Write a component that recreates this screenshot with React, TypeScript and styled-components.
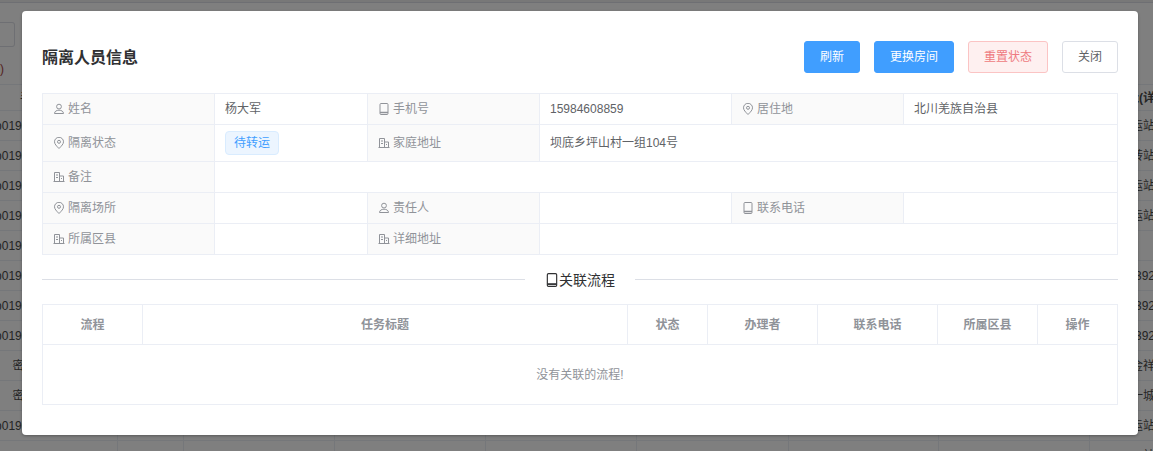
import styled, { createGlobalStyle } from 'styled-components';

type IconName = 'user' | 'mobile' | 'location' | 'building';

const BACK_ROWS = [
  { left: 'b019000000000000000', right: '发运站' },
  { left: 'b019000000000000000', right: '中转站' },
  { left: 'b019000000000000000', right: '发运站' },
  { left: 'b019000000000000000', right: '发运站' },
  { left: 'b019000000000000000', right: '' },
  { left: 'b019000000000000000', right: '138392' },
  { left: 'b019000000000000000', right: '138392' },
  { left: 'b019000000000000000', right: '138392' },
  { left: '密切接触者(一般)', right: '金祥' },
  { left: '密切接触者(一般)', right: '一城' },
  { left: 'b019000000000000000', right: '发运站' },
  { left: '', right: '站' },
];

const FLOW_COLUMNS = [
  { text: '流程', width: 100 },
  { text: '任务标题', width: 485 },
  { text: '状态', width: 80 },
  { text: '办理者', width: 110 },
  { text: '联系电话', width: 120 },
  { text: '所属区县', width: 100 },
  { text: '操作', width: 80 },
];

const Icon = ({ name, size = 12 }: { name: IconName; size?: number }) => (
  <IconSvg viewBox="0 0 12 12" $size={size}>
    {name === 'user' && (
      <>
        <circle cx="6" cy="3.6" r="2.4" />
        <path d="M1.5 10.5C1.5 8.4 3.5 7.2 6 7.2s4.500 1.200 4.500 3.300z" />
      </>
    )}
    {name === 'mobile' && (
      <>
        <rect x="2" y="0.500" width="8" height="11" rx="1" />
        <path d="M2 9.500h8" strokeWidth="1.500" />
      </>
    )}
    {name === 'location' && (
      <>
        <path d="M6 11.500C3.500 9 1.500 7 1.500 4.800a4.500 4.500 0 0 1 9 0C10.500 7 8.500 9 6 11.500z" />
        <circle cx="6" cy="4.800" r="1.500" />
      </>
    )}
    {name === 'building' && (
      <path d="M0.500 10.500h11M1.500 10.500V1.500h5v9M6.500 5h4v5.500M3 4h2M3 6.500h2M8 7.500h1" />
    )}
  </IconSvg>
);

const Label = ({ icon, text }: { icon: IconName; text: string }) => (
  <LabelCell>
    <LabelInner>
      <Icon name={icon} />
      {text}
    </LabelInner>
  </LabelCell>
);

export default function App() {
  return (
    <>
      <GlobalStyle />
      <Page>
        <BackPage>
          <TopStripe />
          <FilterBar>
            <FilterInput />
            <FilterHint>)</FilterHint>
          </FilterBar>
          <BackRow $height={26}>
            <BackCell $pad={20}>手机号</BackCell>
            <BackBlanks />
            <BackLast $bold={true}>地址(详</BackLast>
          </BackRow>
          {BACK_ROWS.map(({ left, right }, i) => (
            <BackRow key={i} $height={30}>
              <BackCell $center={true}>{left}</BackCell>
              <BackBlanks />
              <BackLast>{right}</BackLast>
            </BackRow>
          ))}
        </BackPage>
        <Overlay>
          <Modal>
            <ModalHeader>
              <ModalTitle>隔离人员信息</ModalTitle>
              <ButtonGroup>
                <Button $kind="primary" $width={56}>刷新</Button>
                <Button $kind="primary" $width={80}>更换房间</Button>
                <Button $kind="danger" $width={80}>重置状态</Button>
                <Button $kind="plain" $width={56}>关闭</Button>
              </ButtonGroup>
            </ModalHeader>
            <InfoTable>
              <colgroup>
                <col width={172} />
                <col width={153} />
                <col width={172} />
                <col width={192} />
                <col width={172} />
                <col width={214} />
              </colgroup>
              <tbody>
                <InfoRow $height={31}>
                  <Label icon="user" text="姓名" />
                  <ValueCell>杨大军</ValueCell>
                  <Label icon="mobile" text="手机号" />
                  <ValueCell>15984608859</ValueCell>
                  <Label icon="location" text="居住地" />
                  <ValueCell>北川羌族自治县</ValueCell>
                </InfoRow>
                <InfoRow $height={37}>
                  <Label icon="location" text="隔离状态" />
                  <ValueCell>
                    <StatusTag>待转运</StatusTag>
                  </ValueCell>
                  <Label icon="building" text="家庭地址" />
                  <ValueCell colSpan={3}>坝底乡坪山村一组104号</ValueCell>
                </InfoRow>
                <InfoRow $height={31}>
                  <Label icon="building" text="备注" />
                  <ValueCell colSpan={5} />
                </InfoRow>
                <InfoRow $height={31}>
                  <Label icon="location" text="隔离场所" />
                  <ValueCell />
                  <Label icon="user" text="责任人" />
                  <ValueCell />
                  <Label icon="mobile" text="联系电话" />
                  <ValueCell />
                </InfoRow>
                <InfoRow $height={31}>
                  <Label icon="building" text="所属区县" />
                  <ValueCell />
                  <Label icon="building" text="详细地址" />
                  <ValueCell colSpan={3} />
                </InfoRow>
              </tbody>
            </InfoTable>
            <Divider>
              <DividerText>
                <Icon name="mobile" size={14} />
                关联流程
              </DividerText>
            </Divider>
            <FlowTable>
              <colgroup>
                {FLOW_COLUMNS.map(({ width }, i) => (
                  <col key={i} width={width} />
                ))}
              </colgroup>
              <thead>
                <tr>
                  {FLOW_COLUMNS.map(({ text }, i) => (
                    <FlowHead key={i}>{text}</FlowHead>
                  ))}
                </tr>
              </thead>
              <tbody>
                <tr>
                  <FlowEmpty colSpan={FLOW_COLUMNS.length}>没有关联的流程!</FlowEmpty>
                </tr>
              </tbody>
            </FlowTable>
          </Modal>
        </Overlay>
      </Page>
    </>
  );
}

const BackBlanks = () => (
  <>
    {[0, 1, 2, 3, 4, 5, 6].map((i) => (
      <BackCell key={i} />
    ))}
  </>
);

const GlobalStyle = createGlobalStyle`
  html, body {
    margin: 0;
    padding: 0;
    background: #fff;
    font-family: "Liberation Sans", "Noto Sans CJK SC", sans-serif;
    font-size: 12px;
    line-height: 14px;
  }
`;

const Page = styled.div`
  position: relative;
  width: 1153px;
  height: 451px;
  overflow: hidden;
`;

const BackPage = styled.div`
  color: #4a4a4a;
`;

const TopStripe = styled.div`
  height: 2px;
  background: #f0f0f0;
  border-bottom: 1px solid #dcdfe6;
`;

const FilterBar = styled.div`
  box-sizing: border-box;
  height: 82px;
  padding-top: 19px;
  border-bottom: 1px solid #ebeef5;
  overflow: hidden;
`;

const FilterInput = styled.div`
  box-sizing: border-box;
  width: 15px;
  height: 25px;
  border: 1px solid #dcdfe6;
  border-left: 0;
  border-radius: 0 3px 3px 0;
`;

const FilterHint = styled.div`
  margin-top: 15px;
  color: #a94442;
`;

const BackRow = styled.div<{ $height: number }>`
  box-sizing: border-box;
  display: grid;
  grid-template-columns: 118px 66px 151px 151px 151px 152px 150px 151px 63px;
  height: ${(p) => p.$height}px;
  border-bottom: 1px solid #ebeef5;
`;

const BackCell = styled.div<{ $center?: boolean; $pad?: number }>`
  display: flex;
  align-items: center;
  justify-content: ${(p) => (p.$center ? 'center' : 'flex-start')};
  padding-left: ${(p) => p.$pad ?? 0}px;
  border-right: 1px solid #ebeef5;
  white-space: nowrap;
  min-width: 0;
`;

const BackLast = styled.div<{ $bold?: boolean }>`
  display: flex;
  align-items: center;
  justify-content: flex-end;
  margin-right: -2px;
  white-space: nowrap;
  font-weight: ${(p) => (p.$bold ? 700 : 400)};
  min-width: 0;
`;

const Overlay = styled.div`
  position: absolute;
  inset: 0;
  padding: 11px 0 0 22px;
  background: rgba(0, 0, 0, 0.5);
`;

const Modal = styled.div`
  box-sizing: border-box;
  width: 1116px;
  height: 424px;
  padding: 30px 20px;
  background: #fff;
  border-radius: 4px;
  box-shadow: 0 1px 3px rgba(0, 0, 0, 0.3);
`;

const ModalHeader = styled.div`
  display: flex;
  align-items: center;
  justify-content: space-between;
  margin-bottom: 20px;
`;

const ModalTitle = styled.div`
  padding-top: 2px;
  font-size: 16px;
  line-height: 20px;
  font-weight: 700;
  color: #303133;
`;

const ButtonGroup = styled.div`
  display: flex;
  gap: 14px;
`;

const BUTTON_COLORS = {
  primary: { bg: '#409eff', border: '#409eff', color: '#fff' },
  danger: { bg: '#fef0f0', border: '#fbc4c4', color: '#ee7a80' },
  plain: { bg: '#fff', border: '#dcdfe6', color: '#606266' },
};

const Button = styled.button<{ $kind: keyof typeof BUTTON_COLORS; $width: number }>`
  box-sizing: border-box;
  width: ${(p) => p.$width}px;
  height: 32px;
  padding: 0;
  font-family: inherit;
  font-size: 12px;
  line-height: 14px;
  border-radius: 3px;
  border: 1px solid ${(p) => BUTTON_COLORS[p.$kind].border};
  background: ${(p) => BUTTON_COLORS[p.$kind].bg};
  color: ${(p) => BUTTON_COLORS[p.$kind].color};
`;

const InfoTable = styled.table`
  width: 1075px;
  table-layout: fixed;
  border-collapse: collapse;
  font-size: 12px;
`;

const InfoRow = styled.tr<{ $height: number }>`
  height: ${(p) => p.$height}px;
`;

const LabelCell = styled.td`
  box-sizing: border-box;
  padding: 0 10px;
  border: 1px solid #ebeef5;
  background: #fafafa;
  color: #909399;
`;

const LabelInner = styled.span`
  display: flex;
  align-items: center;
  gap: 3px;
`;

const ValueCell = styled.td`
  box-sizing: border-box;
  padding: 0 10px;
  border: 1px solid #ebeef5;
  color: #606266;
`;

const StatusTag = styled.span`
  display: inline-block;
  box-sizing: border-box;
  height: 24px;
  padding: 0 8px;
  line-height: 22px;
  vertical-align: middle;
  color: #409eff;
  background: #ecf5ff;
  border: 1px solid #d9ecff;
  border-radius: 4px;
`;

const IconSvg = styled.svg<{ $size: number }>`
  flex: none;
  width: ${(p) => p.$size}px;
  height: ${(p) => p.$size}px;
  fill: none;
  stroke: currentColor;
  stroke-width: 1;
`;

const Divider = styled.div`
  display: flex;
  justify-content: center;
  align-items: center;
  height: 1px;
  margin: 24px 0;
  background: #dcdfe6;
`;

const DividerText = styled.div`
  display: flex;
  align-items: center;
  padding: 0 20px;
  background: #fff;
  font-size: 14px;
  line-height: 16px;
  color: #303133;
`;

const FlowTable = styled.table`
  width: 1075px;
  table-layout: fixed;
  border-collapse: collapse;
  font-size: 12px;
`;

const FlowHead = styled.th`
  box-sizing: border-box;
  height: 40px;
  padding: 0;
  text-align: center;
  border: 1px solid #ebeef5;
  color: #909399;
  font-weight: 700;
`;

const FlowEmpty = styled.td`
  box-sizing: border-box;
  height: 60px;
  padding: 0;
  text-align: center;
  border: 1px solid #ebeef5;
  color: #909399;
`;
